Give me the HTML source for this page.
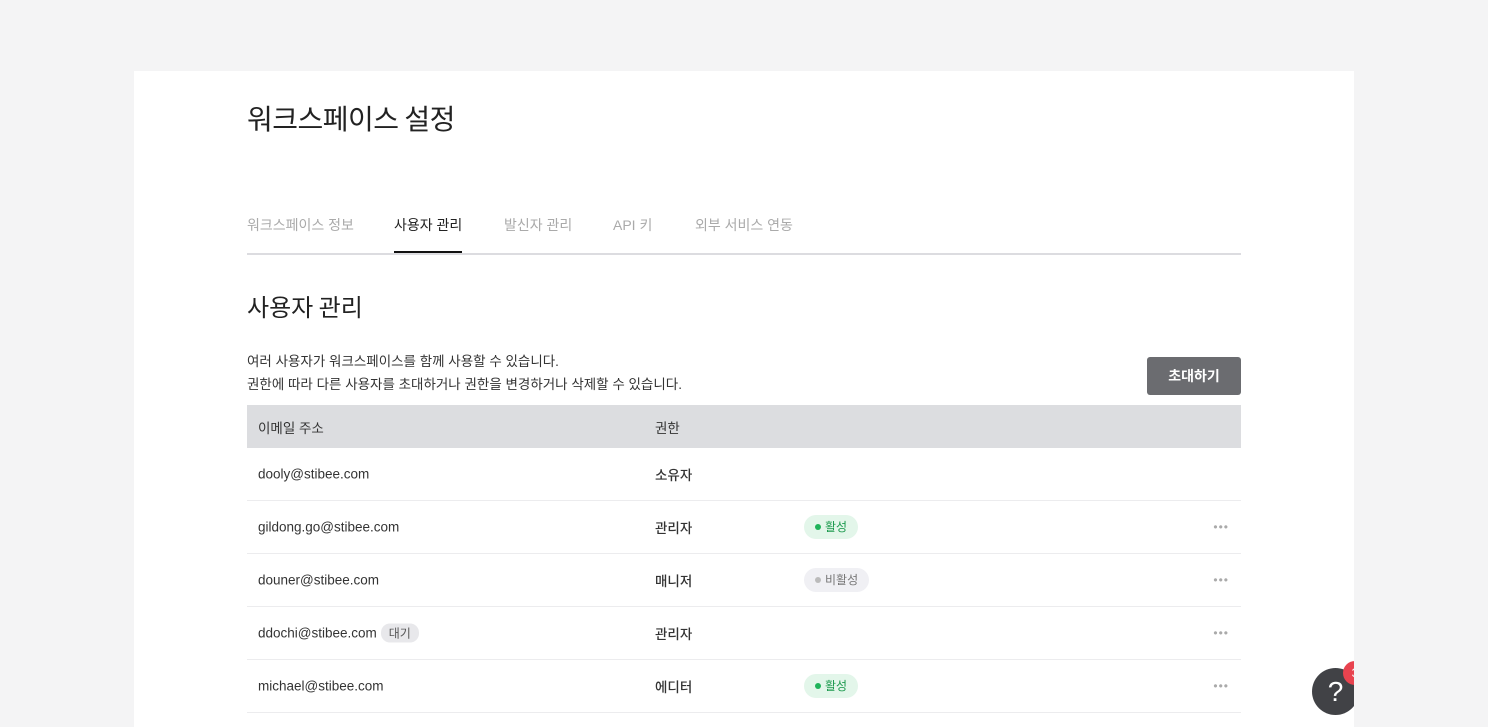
<!DOCTYPE html>
<html style="height:727px;overflow:hidden"><head><meta charset="utf-8"><style>
*{margin:0;padding:0;box-sizing:border-box}
body{width:1488px;height:727px;overflow:hidden;background:#f4f4f5;font-family:"Liberation Sans","Noto Sans CJK KR",sans-serif;color:#333;position:relative}
.card{position:absolute;left:134px;top:71px;width:1220px;height:656px;background:#fff;overflow:hidden}
.in{position:absolute;left:113px;width:994px}
h1{position:absolute;left:113px;top:27px;font-size:28px;font-weight:normal;color:#222;letter-spacing:-0.5px;font-family:"Noto Sans CJK KR",sans-serif}
.tabs{top:144px;height:40px;border-bottom:2px solid #dcdce0;font-size:14px;color:#aaa}
.tabs span{position:absolute;top:0}
.tabs .act{color:#222;border-bottom:2px solid #111;padding-bottom:16px}
h2{position:absolute;left:113px;top:217px;font-size:24px;font-weight:normal;color:#222;font-family:"Noto Sans CJK KR",sans-serif}
.desc{top:279px;font-size:13.5px;line-height:23px;color:#333}
.btn{position:absolute;left:1013px;top:286px;width:94px;height:38px;background:#6b6c70;color:#fff;border-radius:3px;font-size:14px;font-weight:bold;text-align:center;line-height:38px}
.table{top:334px}
.row{position:relative;height:53px;border-bottom:1px solid #ececee;font-size:13.5px;color:#333}
.row.h{height:43px;background:#dcdde0;border:0}
.row span{position:absolute;top:50%;transform:translateY(-50%)}
.e{left:11px}.r{left:408px;font-family:"Noto Sans CJK KR",sans-serif;font-weight:500;color:#333}
.pill{left:557px;height:24px;line-height:24px;padding:0 11px;border-radius:12px;font-size:12px}
.on{background:#e3f6ea;color:#1c9a4e}.off{background:#f0f0f4;color:#777}
.dot{display:inline-block;width:6px;height:6px;border-radius:50%;margin-right:4px;vertical-align:1px}
.dots{right:12px;color:#aaa;font-size:12px;letter-spacing:1px}
.tag{display:inline-block;background:#e8e8eb;color:#555;font-size:12px;border-radius:9px;padding:1px 8px;margin-left:4px}
.help{position:absolute;left:1312px;top:668px;width:47px;height:47px;border-radius:50%;background:#414246;color:#fff;font-size:28px;text-align:center;line-height:47px}
.badge{position:absolute;left:1343px;top:661px;width:24px;height:24px;border-radius:50%;background:#e8434f;color:#fff;font-size:12px;text-align:center;line-height:24px}
.cover{position:absolute;left:1354px;top:0;width:134px;height:727px;background:#f4f4f5}
</style></head><body>
<div class="card">
<h1>워크스페이스 설정</h1>
<div class="in tabs">
<span style="left:0">워크스페이스 정보</span>
<span class="act" style="left:147px">사용자 관리</span>
<span style="left:257px">발신자 관리</span>
<span style="left:366px">API 키</span>
<span style="left:448px">외부 서비스 연동</span>
</div>
<h2>사용자 관리</h2>
<div class="in desc">여러 사용자가 워크스페이스를 함께 사용할 수 있습니다.<br>권한에 따라 다른 사용자를 초대하거나 권한을 변경하거나 삭제할 수 있습니다.</div>
<div class="btn">초대하기</div>
<div class="in table">
<div class="row h"><span class="e">이메일 주소</span><span class="r" style="font-weight:normal">권한</span></div>
<div class="row"><span class="e">dooly@stibee.com</span><span class="r">소유자</span></div>
<div class="row"><span class="e">gildong.go@stibee.com</span><span class="r">관리자</span><span class="pill on"><i class="dot" style="background:#1fb35a"></i>활성</span><span class="dots">•••</span></div>
<div class="row"><span class="e">douner@stibee.com</span><span class="r">매니저</span><span class="pill off"><i class="dot" style="background:#bbb"></i>비활성</span><span class="dots">•••</span></div>
<div class="row"><span class="e">ddochi@stibee.com<i class="tag" style="font-style:normal">대기</i></span><span class="r">관리자</span><span class="dots">•••</span></div>
<div class="row"><span class="e">michael@stibee.com</span><span class="r">에디터</span><span class="pill on"><i class="dot" style="background:#1fb35a"></i>활성</span><span class="dots">•••</span></div>
</div>
</div>
<div class="help">?</div>
<div class="badge">3</div>
<div class="cover"></div>
</body></html>
